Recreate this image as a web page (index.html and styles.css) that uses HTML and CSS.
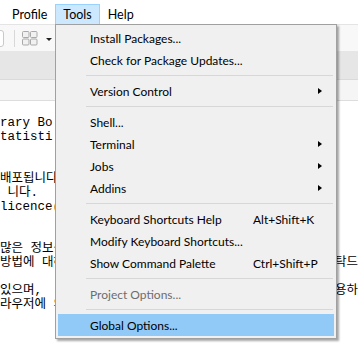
FILE: index.html
```html
<!DOCTYPE html>
<html>
<head>
<meta charset="utf-8">
<link rel="stylesheet" href="styles.css">
</head>
<body>
<div class="app">
  <div class="menubar">
    <span class="mtitle">Profile</span>
    <span class="mtitle active">Tools</span>
    <span class="mtitle">Help</span>
  </div>
  <div class="toolbar">
    <div class="searchbox"></div>
    <div class="divider"></div>
    <svg class="gridicon" width="16" height="15" viewBox="0 0 16 15">
      <rect x="0.5" y="0.5" width="6.5" height="6" rx="1" fill="#f1f1f1" stroke="#a9a9a9"/>
      <rect x="8.5" y="0.5" width="6.5" height="6" rx="1" fill="#f1f1f1" stroke="#a9a9a9"/>
      <rect x="0.5" y="8" width="6.5" height="6" rx="1" fill="#f1f1f1" stroke="#a9a9a9"/>
      <rect x="8.5" y="8" width="6.5" height="6" rx="1" fill="#f1f1f1" stroke="#a9a9a9"/>
    </svg>
    <span class="caret"></span>
  </div>
  <div class="tabstrip"></div>
  <div class="subbar"></div>
  <div class="console">
    <div class="line"><span>rary Bo</span></div>
    <div class="line"><span>tatisti</span></div>
    <div class="line"></div>
    <div class="line"></div>
    <div class="line"><span>배포됩니다.</span></div>
    <div class="line"><span> 니다.</span></div>
    <div class="line"><span>licence()'</span></div>
    <div class="line"></div>
    <div class="line"></div>
    <div class="line"><span>많은 정보를</span></div>
    <div class="line"><span>방법에 대해서는</span><span class="tail">탁드</span></div>
    <div class="line"></div>
    <div class="line"><span>있으며,</span><span class="tail">용하</span></div>
    <div class="line"><span>라우저에 의한</span></div>
  </div>

  <div class="menu">
    <div class="item"><span class="label">Install Packages...</span></div>
    <div class="item"><span class="label">Check for Package Updates...</span></div>
    <div class="sep"></div>
    <div class="item"><span class="label">Version Control</span><span class="key"></span><span class="arrow"></span></div>
    <div class="sep"></div>
    <div class="item"><span class="label">Shell...</span></div>
    <div class="item"><span class="label">Terminal</span><span class="key"></span><span class="arrow"></span></div>
    <div class="item"><span class="label">Jobs</span><span class="key"></span><span class="arrow"></span></div>
    <div class="item"><span class="label">Addins</span><span class="key"></span><span class="arrow"></span></div>
    <div class="sep"></div>
    <div class="item"><span class="label">Keyboard Shortcuts Help</span><span class="key">Alt+Shift+K</span></div>
    <div class="item"><span class="label">Modify Keyboard Shortcuts...</span></div>
    <div class="item"><span class="label">Show Command Palette</span><span class="key">Ctrl+Shift+P</span></div>
    <div class="sep"></div>
    <div class="item disabled"><span class="label">Project Options...</span></div>
    <div class="sep"></div>
    <div class="item selected"><span class="label">Global Options...</span></div>
  </div>
</div>
</body>
</html>
```
FILE: styles.css
```css
* { box-sizing: border-box; }
html, body { margin: 0; padding: 0; }
body {
  width: 358px;
  height: 343px;
  overflow: hidden;
  background: #ffffff;
  font-family: "Lato", "Noto Sans", sans-serif;
  font-size: 12.5px;
  color: #000;
}
.app {
  position: relative;
  width: 358px;
  height: 343px;
  overflow: hidden;
  display: flex;
  flex-direction: column;
}
.menubar {
  height: 24px;
  display: flex;
  align-items: flex-end;
  padding-left: 4px;
  background: #ffffff;
  flex: none;
}
.mtitle {
  height: 20px;
  line-height: 19px;
  padding: 0 7px;
  border: 1px solid transparent;
}
.mtitle.active {
  background: #cce8ff;
  border-color: #99d1ff;
  border-bottom: none;
}
.toolbar {
  height: 27px;
  flex: none;
  background: #f8f8f8;
  border-top: 1px solid #e4e4e4;
  display: flex;
  align-items: center;
}
.searchbox {
  width: 14px;
  height: 17px;
  margin-left: -10px;
  border: 1px solid #c9c9c9;
  border-radius: 3px;
  background: #fff;
}
.divider {
  width: 1px;
  height: 17px;
  background: #d8d8d8;
  margin-left: 10px;
}
.gridicon {
  margin-left: 7px;
  margin-top: 1px;
}
.caret {
  margin-left: 8px;
  margin-top: 3px;
  width: 0;
  height: 0;
  border-left: 3px solid transparent;
  border-right: 3px solid transparent;
  border-top: 3px solid #222;
}
.tabstrip {
  height: 29px;
  flex: none;
  background: #e6e6e6;
  border-bottom: 1px solid #dadada;
}
.subbar {
  height: 21px;
  flex: none;
  background: #f5f5f5;
  border-bottom: 1px solid #dddddd;
}
.console {
  flex: 1;
  background: #fff;
  padding-top: 15px;
  font-family: "Liberation Mono", "Noto Sans CJK KR", monospace;
  font-size: 12.5px;
  color: #000;
}
.line {
  height: 14px;
  line-height: 14px;
  white-space: pre;
  display: flex;
}
.line .tail {
  margin-left: auto;
}
.menu {
  position: absolute;
  left: 55px;
  top: 24px;
  width: 282px;
  padding: 2px;
  background: #f0f0f0;
  border: 1px solid #a0a0a0;
  box-shadow: 2px 2px 2px rgba(0, 0, 0, 0.35);
  font-size: 12px;
}
.item {
  height: 22px;
  display: grid;
  grid-template-columns: 163px 1fr auto;
  align-items: center;
  padding: 0 12px 0 32px;
  white-space: nowrap;
}
.item.disabled { color: #6d6d6d; }
.item.selected { background: #91c9f7; }
.arrow {
  width: 0;
  height: 0;
  border-left: 4px solid #000;
  border-top: 3.5px solid transparent;
  border-bottom: 3.5px solid transparent;
}
.sep {
  height: 9px;
  padding-top: 4px;
  margin-left: 28px;
  margin-right: 1px;
}
.sep::before {
  content: "";
  display: block;
  height: 1px;
  background: #d7d7d7;
}
```
